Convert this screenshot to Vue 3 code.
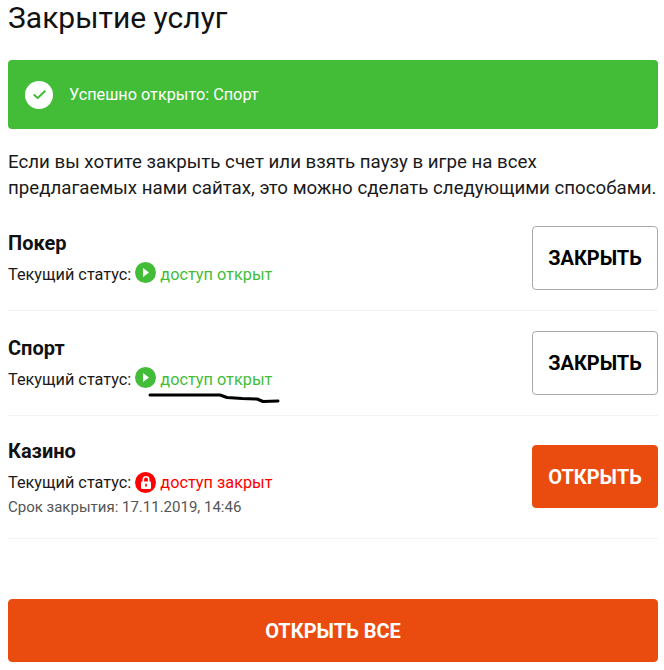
<template>
  <div class="page">
    <h1>Закрытие услуг</h1>

    <div class="notice">
      <span class="notice-icon">
        <svg width="13" height="9" viewBox="0 0 13 9">
          <path d="M0.7 4.500 L4.700 8 L12.300 0.700" fill="none" stroke="#43bd38" stroke-width="2" />
        </svg>
      </span>
      <span>Успешно открыто: Спорт</span>
    </div>

    <p class="intro">
      Если вы хотите закрыть счет или взять паузу в игре на всех<br>
      предлагаемых нами сайтах, это можно сделать следующими способами.
    </p>

    <div v-for="item in services" :key="item.name" class="service" :class="item.cls">
      <div class="info">
        <h4>{{ item.name }}</h4>
        <div class="status">
          <span>Текущий статус:</span>
          <span class="badge" :class="{ closed: item.closed }">
            <svg v-if="item.closed" width="10" height="13" viewBox="0 0 10 13">
              <rect x="0" y="5.500" width="10" height="7.500" rx="1" fill="#fff" />
              <path d="M2.300 6 V3.500 a2.700 2.700 0 0 1 5.400 0 V6" fill="none" stroke="#fff" stroke-width="1.600" />
              <rect x="4.200" y="7.800" width="1.600" height="2.800" fill="#f00" />
            </svg>
            <svg v-else class="play" width="6" height="9" viewBox="0 0 6 9">
              <path d="M0 0 L6 4.500 L0 9 Z" fill="#fff" />
            </svg>
          </span>
          <span :class="item.closed ? 'red' : 'green'">{{ item.closed ? 'доступ закрыт' : 'доступ открыт' }}</span>
        </div>
        <div v-if="item.term" class="term">Срок закрытия: {{ item.term }}</div>
      </div>
      <button class="btn" :class="{ orange: item.closed }">{{ item.closed ? 'ОТКРЫТЬ' : 'ЗАКРЫТЬ' }}</button>
    </div>

    <button class="btn orange wide">ОТКРЫТЬ ВСЕ</button>

    <svg class="scribble" width="134" height="14" viewBox="0 0 134 14">
      <path d="M3 4 L73 4 L80 6.500 L95 7.500 L110 8 L116 10.500 L131 10"
        fill="none" stroke="#000" stroke-width="3" stroke-linecap="round" stroke-linejoin="round" />
    </svg>
  </div>
</template>

<script setup>
const services = [
  { name: 'Покер', closed: false, cls: 'poker' },
  { name: 'Спорт', closed: false, cls: 'sport' },
  { name: 'Казино', closed: true, cls: 'casino', term: '17.11.2019, 14:46' },
];
</script>

<style>
body {
  background: #fff;
}
</style>

<style scoped>
.page {
  position: relative;
  width: 650px;
  height: 670px;
  padding: 0 6px 0 8px;
  font-family: Roboto, sans-serif;
  color: #1a1a1a;
  overflow: hidden;
}

h1 {
  margin: 0;
  height: 60px;
  font-size: 30px;
  font-weight: 400;
  line-height: 36px;
  color: #111;
}

.notice {
  display: flex;
  align-items: center;
  gap: 16px;
  height: 69px;
  padding-left: 17px;
  background: #43bd38;
  border-radius: 4px;
  color: #fff;
  font-size: 16.250px;
}

.notice-icon {
  display: flex;
  align-items: center;
  justify-content: center;
  width: 28px;
  height: 28px;
  border-radius: 50%;
  background: #fff;
}

.intro {
  margin: 20px 0 0;
  font-size: 18.720px;
  line-height: 26px;
  white-space: nowrap;
  color: #1a1a1a;
}

.service {
  display: flex;
  justify-content: space-between;
  align-items: flex-start;
  border-bottom: 1px solid #f3f3f3;
}

.poker {
  margin-top: 25px;
  height: 84px;
}

.sport {
  padding-top: 20px;
  height: 84px;
}

.casino {
  padding-top: 29px;
  height: 93px;
}

.casino .btn {
  height: 63px;
}

.info {
  padding-top: 5px;
}

.casino .info {
  margin-top: -6px;
  padding-top: 0;
}

h4 {
  margin: 0;
  font-size: 20px;
  font-weight: 700;
  line-height: 24px;
  color: #111;
}

.status {
  display: flex;
  align-items: center;
  gap: 3px;
  margin-top: 9px;
  font-size: 16.300px;
  line-height: 22px;
}

.badge {
  display: flex;
  align-items: center;
  justify-content: center;
  width: 21px;
  height: 21px;
  margin-top: -6px;
  margin-left: 1px;
  margin-right: 1px;
  border-radius: 50%;
  background: #43bd38;
}

.badge.closed {
  margin-top: -1px;
  background: #f00;
}

.green {
  color: #43bd38;
}

.red {
  color: #f00;
}

.term {
  margin-top: 3px;
  font-size: 15px;
  line-height: 20px;
  color: #555;
}

.btn {
  flex: none;
  width: 126px;
  height: 64px;
  padding: 0;
  border: 1px solid #aaa9a5;
  border-radius: 4px;
  background: #fff;
  font-family: Roboto, sans-serif;
  font-size: 20px;
  font-weight: 700;
  color: #000;
}

.btn.orange {
  border-color: #ea4b0e;
  background: #ea4b0e;
  color: #fff;
}

.wide {
  display: block;
  width: 650px;
  height: 63px;
  margin-top: 60px;
}

.scribble {
  position: absolute;
  left: 147px;
  top: 391px;
}
</style>
